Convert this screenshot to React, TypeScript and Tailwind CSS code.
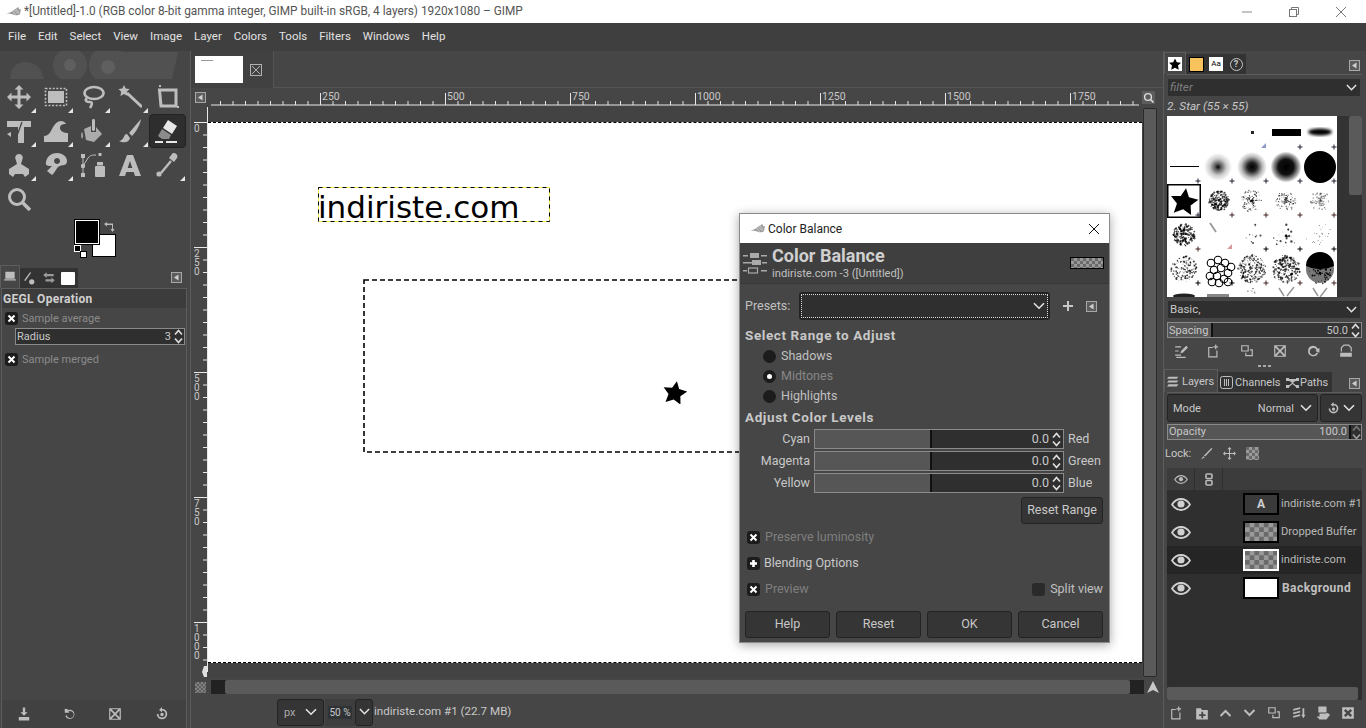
import React from "react";

const FILL = "#bdbdbd";

function Ic({ s = 16, v = 24, children }: { s?: number; v?: number; children: React.ReactNode }) {
  return (
    <svg width={s} height={s} viewBox={`0 0 ${v} ${v}`} fill={FILL} className="block shrink-0">
      {children}
    </svg>
  );
}

const Chevron = ({ w = 12, c = "#e4e4e4" }: { w?: number; c?: string }) => (
  <svg width={w} height={w * 0.7} viewBox="0 0 12 8" fill="none" className="block shrink-0">
    <path d="M1 1l5 5 5-5" stroke={c} strokeWidth="1.6" />
  </svg>
);

const Spin = ({ dim = false }: { dim?: boolean }) => (
  <svg width="9" height="15" viewBox="0 0 9 15" fill="none" className="block shrink-0">
    <path d="M1 5.5l3.5-4 3.5 4" stroke={dim ? "#777" : "#ddd"} strokeWidth="1.7" />
    <path d="M1 9.5l3.5 4 3.5-4" stroke={dim ? "#999" : "#ddd"} strokeWidth="1.7" />
  </svg>
);

const DockMenu = () => (
  <svg width="11" height="11" viewBox="0 0 11 11" className="block shrink-0">
    <rect x="0.5" y="0.5" width="10" height="10" fill="#5c5c5c" stroke="#a8a8a8" />
    <path d="M7.5 2.5v6L3 5.5z" fill="#cfcfcf" />
  </svg>
);

const Wilber = ({ c = "#9b9b9b", s = 15 }: { c?: string; s?: number }) => (
  <svg width={s} height={s * 0.7} viewBox="0 0 17 12" className="block shrink-0">
    <path d="M0 8c4 0 5-1 8-3l6-4 1 3 2-1-1 6c-2 2-5 2-7 1L6 9z" fill={c} />
    <path d="M9 4l5 5M11 3l4 5M7 5l4 5" stroke="#ffffff" strokeWidth="0.6" />
  </svg>
);

const Checker = ({ w, h, cell = 5 }: { w: number; h: number; cell?: number }) => {
  const squares: React.ReactNode[] = [];
  for (let y = 0; y * cell < h; y++) {
    for (let x = 0; x * cell < w; x++) {
      if ((x + y) % 2 === 0) squares.push(<rect key={`${x}-${y}`} x={x * cell} y={y * cell} width={cell} height={cell} fill="#6a6a6a" />);
    }
  }
  return (
    <svg width={w} height={h} viewBox={`0 0 ${w} ${h}`} className="block">
      <rect width={w} height={h} fill="#999999" />
      {squares}
    </svg>
  );
};

const Tri = () => (
  <svg width="5" height="5" viewBox="0 0 5 5" className="absolute right-[1px] bottom-[1px]">
    <path d="M5 0v5H0z" fill="#e6e6e6" />
  </svg>
);

const STAR = "M12 1l3.600 7.400 8.400 1-6 5.800 1.600 8.300L12 19.500 4.400 23.500 6 15.200 0 9.400l8.400-1z";

const tools: { k: string; n: React.ReactNode; tri: boolean; active?: boolean }[] = [
  { k: "move", tri: true, n: <path d="M12 0l4.5 4.5H13.5V10.5h6V7.5L24 12l-4.5 4.5v-3h-6v6h3L12 24l-4.5-4.5h3v-6h-6v3L0 12l4.5-4.5v3h6v-6h-3z" /> },
  { k: "rect", tri: true, n: <g><rect x="1.5" y="3.5" width="21" height="17" fill="none" stroke={FILL} strokeWidth="1.6" strokeDasharray="2 1.6" /><rect x="4" y="6" width="16" height="12" /></g> },
  { k: "lasso", tri: true, n: <g fill="none" stroke={FILL} strokeWidth="2.6"><ellipse cx="13" cy="8" rx="9.5" ry="6" /><path d="M6 13c-3 3 0 4 3 4s2 3 0 6" /></g> },
  { k: "wand", tri: true, n: <g><path d="M9 8l15 14" stroke={FILL} strokeWidth="3" /><path d="M6 0l1.6 3.6L11.5 4 8.8 6.8 9.6 11 6 9 2.4 11l.8-4.2L.5 4l3.9-.4z" /></g> },
  { k: "crop", tri: false, n: <g><path d="M4 0h2v2H4z" /><path d="M4.5 5H21v16H6z" fill="none" stroke={FILL} strokeWidth="3" /><rect x="22" y="21" width="2" height="2" /></g> },
  { k: "transform", tri: true, n: <g><path d="M0 2h24v6H17v16h-6V8H0z" /><path d="M15 3l-4 11c-1 4-4 3-8 2" fill="none" stroke="#464646" strokeWidth="1.3" /><path d="M0 15l4-2v5z" /></g> },
  { k: "warp", tri: true, n: <path d="M0 23v-6c4 0 6-3 8-7 2-4 5-8 9-8 2 0 4 1 5 3-4 0-6 1-6 4s4 5 8 5v9z" /> },
  { k: "bucket", tri: true, n: <g><rect x="11" y="0" width="3" height="12" rx="1.4" /><path d="M3 10l7-3v6h5V8l6 7-8 8-8-2z" opacity=".85" /><path d="M1 13c2 3 1 6 0 7-1-2-2-4 0-7z" opacity=".7" /></g> },
  { k: "brush", tri: true, n: <g><path d="M23 0L11 14l3 3C18 13 22 6 23 0z" /><path d="M9 15c-4 0-2 6-8 7 4 2 10 2 11-3z" /></g> },
  { k: "eraser", tri: false, active: true, n: <g><path d="M13 1l9 6-5 8-9-6z" fill="#e8e8e8" /><path d="M7 10l9 6-2 4H7l-4-3z" fill="#8b8b8b" /><rect x="0" y="22" width="8" height="2" fill="#e8e8e8" /><rect x="11" y="22" width="11" height="2" fill="#e8e8e8" /></g> },
  { k: "clone", tri: true, n: <path d="M12 1a4 4 0 0 1 3 6.5L14 11l8 5v5l-4 3-2-3H8l-2 3-4-3v-5l8-5-1-3.5A4 4 0 0 1 12 1z" /> },
  { k: "heal", tri: true, n: <path d="M2 9C3 3 8 0 13 0c6 0 10 4 10 8 0 6-6 3-9 6-2 2-4 7-6 8l-5-4 5-5C4 13 1 13 2 9zM13 5a3 3 0 1 0 .1 0z" fillRule="evenodd" /> },
  { k: "path", tri: false, n: <g><rect x="0" y="1" width="4" height="4" /><rect x="0" y="20" width="4" height="4" /><circle cx="2" cy="13" r="2.2" /><path d="M2 4v17M2 13L7 5c2-3 5-3 8-3" fill="none" stroke={FILL} strokeWidth="1" /><rect x="14" y="13" width="10" height="11" rx="1" /><rect x="16" y="9" width="6" height="3.5" /><rect x="17.5" y="0" width="3" height="3" /></g> },
  { k: "text", tri: false, n: <path d="M9 2h6l8 21h-6l-1.3-4H8.3L7 23H1zM12 8l-2.3 7h4.6z" fillRule="evenodd" /> },
  { k: "picker", tri: true, n: <g><path d="M16 8L6 20" stroke={FILL} strokeWidth="2.4" /><circle cx="4" cy="21" r="2.6" /><path d="M14 5l5 4 3-4c2-3-3-7-5-4z" /></g> },
  { k: "zoom", tri: false, n: <g><circle cx="10" cy="10" r="7.5" fill="none" stroke={FILL} strokeWidth="3" /><path d="M15 15l8 8" stroke={FILL} strokeWidth="3.6" /></g> },
];

const Check = ({ sign = "x" }: { sign?: "x" | "+" }) => (
  <span className="flex h-[13px] w-[13px] items-center justify-center rounded-[3px] bg-[#1c1c1c] shrink-0">
    <svg width="9" height="9" viewBox="0 0 9 9">
      {sign === "x" ? <path d="M1.5 1.5l6 6M7.5 1.5l-6 6" stroke="#fff" strokeWidth="2" /> : <path d="M4.5 1v7M1 4.5h7" stroke="#fff" strokeWidth="2.6" />}
    </svg>
  </span>
);

function rng(seed: number) {
  let s = seed;
  return () => {
    s = (s * 16807) % 2147483647;
    return s / 2147483647;
  };
}

function Splat({ cx, cy, r, n, seed, dot = 0.7, op = 0.7, ring = false }: { cx: number; cy: number; r: number; n: number; seed: number; dot?: number; op?: number; ring?: boolean }) {
  const R = rng(seed);
  const out: React.ReactNode[] = [];
  for (let i = 0; i < n; i++) {
    const a = R() * Math.PI * 2;
    const d = (ring ? Math.sqrt(R()) : R()) * r;
    out.push(<circle key={i} cx={(cx + Math.cos(a) * d).toFixed(1)} cy={(cy + Math.sin(a) * d).toFixed(1)} r={(0.25 + R() * dot).toFixed(2)} fill="#000" opacity={op} />);
  }
  return <g>{out}</g>;
}

const Plus = ({ x, y, c = "#000" }: { x: number; y: number; c?: string }) => <path d={`M${x - 2.5} ${y}h5M${x} ${y - 2.5}v5`} stroke={c} strokeWidth="1" />;

function Brushes() {
  const cw = 34;
  const cell = (col: number, row: number) => [col * cw + 17, row * cw + 17];
  const soft = (col: number, id: string, r: number) => {
    const [x, y] = cell(col, 1);
    return <circle cx={x} cy={y} r={r} fill={`url(#${id})`} />;
  };
  return (
    <svg width="170" height="181" viewBox="0 0 170 181" className="block shrink-0">
      <defs>
        <radialGradient id="g1"><stop offset="0" stopColor="#000" /><stop offset=".2" stopColor="#555" /><stop offset=".6" stopColor="#ccc" /><stop offset="1" stopColor="#fff" /></radialGradient>
        <radialGradient id="g2"><stop offset="0" stopColor="#000" /><stop offset=".3" stopColor="#222" /><stop offset=".7" stopColor="#bbb" /><stop offset="1" stopColor="#fff" /></radialGradient>
        <radialGradient id="g3"><stop offset="0" stopColor="#000" /><stop offset=".5" stopColor="#111" /><stop offset=".85" stopColor="#aaa" /><stop offset="1" stopColor="#fff" /></radialGradient>
        <filter id="b1"><feGaussianBlur stdDeviation="1.4" /></filter>
      </defs>
      <rect width="170" height="181" fill="#fff" />
      <rect x="84" y="15" width="3" height="3" fill="#222" />
      <rect x="105" y="13" width="29" height="7" fill="#000" />
      <ellipse cx="153" cy="16" rx="12" ry="3.4" fill="#000" filter="url(#b1)" />
      <path d="M99 32v-5l-5 5z" fill="#8d9ac6" />
      <Plus x={133} y={31} c="#223" />
      <Plus x={167} y={31} c="#223" />
      <rect x="3" y="50" width="29" height="1" fill="#000" />
      {soft(1, "g1", 14)}
      {soft(2, "g2", 15)}
      {soft(3, "g3", 15.5)}
      <circle cx="153" cy="51" r="16" fill="#000" />
      {[31, 65, 99, 133, 167].map((x) => <Plus key={x} x={x} y={65} c="#223" />)}
      <Splat cx={52} cy={85} r={10} n={190} seed={11} ring dot={0.9} />
      <Splat cx={85} cy={85} r={11} n={110} seed={12} dot={0.6} />
      <Splat cx={119} cy={85} r={10} n={110} seed={13} dot={0.5} />
      <Splat cx={153} cy={85} r={10} n={110} seed={14} dot={0.7} op={0.35} />
      {[65, 99, 133, 167].map((x) => <Plus key={x} x={x} y={99} c="#422" />)}
      <rect x="0.75" y="68.75" width="32.5" height="32.5" fill="none" stroke="#000" strokeWidth="1.5" />
      <path d={STAR} fill="#000" transform="translate(3.500 71) scale(1.15) rotate(8 12 12)" />
      <Plus x={31} y={99} c="#223" />
      <Splat cx={17} cy={119} r={11} n={220} seed={15} ring dot={0.9} />
      <path d="M43 107l6 9" stroke="#999" strokeWidth="1.8" />
      <path d="M65 133v-5l-5 5z" fill="#d89a9a" />
      <Splat cx={88} cy={120} r={13} n={12} seed={16} dot={0.9} />
      <Splat cx={119} cy={120} r={13} n={24} seed={17} dot={1.1} />
      <Splat cx={153} cy={120} r={14} n={24} seed={18} dot={0.2} op={1} />
      <Plus x={31} y={133} c="#422" />
      <Plus x={99} y={133} />
      <Plus x={133} y={133} />
      <Plus x={167} y={133} />
      <Splat cx={17} cy={153} r={13} n={170} seed={19} dot={0.7} ring />
      <g fill="none" stroke="#000" strokeWidth="1.1">
        {[[44,147],[51,144],[58,147],[64,151],[47,154],[54,152],[61,157],[43,160],[50,160],[57,163],[45,166],[52,167],[61,166]].map(([x, y], i) => <circle key={i} cx={x} cy={y} r="3.8" />)}
      </g>
      <Splat cx={85} cy={153} r={14} n={280} seed={20} dot={0.7} ring />
      <Splat cx={119} cy={153} r={14} n={230} seed={21} dot={0.9} ring />
      <circle cx="153" cy="153" r="14" fill="#777" />
      <path d="M139 150a14 14 0 0 1 28 0c-8 4-20 4-28 0z" fill="#000" />
      <Splat cx={153} cy={157} r={11} n={70} seed={22} dot={0.7} op={1} />
      <Plus x={31} y={167} />
      <Plus x={65} y={167} />
      <Plus x={99} y={167} c="#422" />
      <Plus x={133} y={167} c="#422" />
      <Plus x={167} y={167} c="#422" />
      <ellipse cx="17" cy="180" rx="11" ry="2.5" fill="#222" />
      <rect x="40" y="178" width="22" height="3" fill="#888" />
      <Splat cx={85} cy={175} r={5} n={10} seed={23} dot={0.5} />
      <path d="M112 172l5 8M127 171l-7 9M146 172l5 8M160 172l-7 9" stroke="#999" strokeWidth="1.5" />
    </svg>
  );
}

const TopRuler = () => {
  const ticks: React.ReactNode[] = [];
  for (let i = 0; i < 74; i++) {
    const x = 9 + i * 12.5;
    const major = (i - 8) % 10 === 0;
    ticks.push(<rect key={i} x={x} y={major ? 4 : 12} width="1" height={major ? 12 : 4} fill="#e8e8e8" />);
  }
  const labels = ["250", "500", "750", "1000", "1250", "1500", "1750"];
  return (
    <svg width="928" height="17" viewBox="0 0 928 17" className="block">
      <rect x="0" y="15.5" width="928" height="1" fill="#e8e8e8" />
      {ticks}
      {labels.map((t, i) => (
        <text key={t} x={111 + i * 125} y="11" fontSize="10.5" fill="#c8c8c8" fontFamily="Roboto, sans-serif">{t}</text>
      ))}
    </svg>
  );
};

const SideRuler = () => {
  const ticks: React.ReactNode[] = [];
  for (let i = 0; i < 45; i++) {
    const y = 0 + i * 12.5 + 15;
    const major = i % 10 === 0;
    ticks.push(<rect key={i} x={major ? 3 : 12} y={y} width={major ? 13 : 4} height="1" fill="#e8e8e8" />);
  }
  const lab: [string[], number][] = [[["0"], 25], [["2", "5", "0"], 150], [["5", "0", "0"], 275], [["7", "5", "0"], 400], [["1", "0", "0", "0"], 525]];
  return (
    <svg width="17" height="571" viewBox="0 0 17 571" className="block">
      <rect x="16" y="0" width="1" height="565" fill="#e8e8e8" />
      {ticks}
      {lab.map(([digits, y], i) => (
        <text key={i} y={y} fontSize="10" fill="#c8c8c8" fontFamily="Roboto, sans-serif">
          {digits.map((d, j) => (
            <tspan key={j} x="3" dy={j === 0 ? 0 : 9}>{d}</tspan>
          ))}
        </text>
      ))}
      <path d="M13 559h3v11h-3l-2-5z" fill="#e0e0e0" />
    </svg>
  );
};

const Slider = ({ label, right }: { label: string; right: string }) => (
  <div className="flex h-[22px] items-center">
    <span className="w-[69px] pr-[4px] text-right text-[#c8c8c8]">{label}</span>
    <div className="flex h-[20px] w-[250px] border border-[#8a8a8a] bg-[#2f2f2f]">
      <div className="w-[117px] border-r-2 border-[#111] bg-[#565656]" />
      <div className="flex flex-1 items-center justify-end gap-[3px] pr-[2px] text-[#c8c8c8]">
        <span>0.0</span>
        <Spin />
      </div>
    </div>
    <span className="pl-[4px] text-[#c8c8c8]">{right}</span>
  </div>
);

const Btn = ({ t }: { t: string }) => (
  <div className="flex h-[27px] w-[85px] items-center justify-center rounded-[3px] border border-[#232323] bg-[#353535] text-[#c8c8c8]">{t}</div>
);

const Radio = ({ t, on = false }: { t: string; on?: boolean }) => (
  <div className="flex h-[20px] items-center gap-[5px] pl-[23px]">
    <span className="flex h-[13px] w-[13px] items-center justify-center rounded-full bg-[#1c1c1c]">
      {on && <span className="h-[5px] w-[5px] rounded-full bg-white" />}
    </span>
    <span className={on ? "text-[#868686]" : "text-[#c0c0c0]"}>{t}</span>
  </div>
);

const Eye = () => (
  <svg width="20" height="13" viewBox="0 0 20 13" className="block">
    <path d="M1 6.5C4 2 7 1 10 1s6 1 9 5.5C16 11 13 12 10 12S4 11 1 6.5z" fill="none" stroke="#d0d0d0" strokeWidth="1.8" />
    <circle cx="10" cy="6" r="3.6" fill="#d0d0d0" />
  </svg>
);

const Layer = ({ name, thumb, active = false, bold = false }: { name: string; thumb: React.ReactNode; active?: boolean; bold?: boolean }) => (
  <div className={`flex h-[28px] items-center ${active ? "bg-[#252525]" : ""}`}>
    <div className="flex w-[28px] justify-center"><Eye /></div>
    <div className={`ml-[48px] flex h-[22px] w-[36px] shrink-0 items-center justify-center overflow-hidden border-2 ${active ? "border-white" : "border-black"}`}>{thumb}</div>
    <span className={`ml-[2px] whitespace-nowrap ${bold ? "ml-[3px] text-[12px] font-bold tracking-[0.45px] text-[#c0c0c0]" : "text-[11.2px] text-[#b8b8b8]"}`}>{name}</span>
  </div>
);

export default function App() {
  return (
    <div className="relative flex h-[728px] w-[1366px] flex-col overflow-hidden bg-[#464646] text-[12px] leading-none text-[#c8c8c8] [font-family:'Roboto','Noto_Sans',sans-serif]">
      {/* title bar */}
      <div className="flex h-[23px] items-center bg-white text-[#555]">
        <div className="ml-[6px] mr-[2px] w-[16px]"><Wilber /></div>
        <span className="text-[11.85px] whitespace-nowrap">*[Untitled]-1.0 (RGB color 8-bit gamma integer, GIMP built-in sRGB, 4 layers) 1920x1080 – GIMP</span>
        <div className="ml-auto flex items-center text-[#666]">
          <svg width="12" height="12" viewBox="0 0 12 12" className="mr-[35px]"><path d="M1 6h10" stroke="#888" /></svg>
          <svg width="12" height="12" viewBox="0 0 12 12" className="mr-[35px]" fill="none" stroke="#777"><rect x="1.5" y="3.5" width="7" height="7" /><path d="M3.5 3.5v-2h7v7h-2" /></svg>
          <svg width="12" height="12" viewBox="0 0 12 12" className="mr-[19px]" fill="none" stroke="#777"><path d="M1 1l10 10M11 1L1 11" /></svg>
        </div>
      </div>
      {/* menu */}
      <div className="flex h-[28px] items-center gap-[12px] bg-[#3f3f3f] pl-[8px] text-[11.5px] text-[#e2e2e2]">
        {["File", "Edit", "Select", "View", "Image", "Layer", "Colors", "Tools", "Filters", "Windows", "Help"].map((m) => <span key={m}>{m}</span>)}
      </div>

      <div className="flex flex-1">
        {/* left dock */}
        <div className="flex w-[191px] flex-col border-r border-[#5c5c5c] shrink-0">
          <div className="relative h-[28px] shrink-0">
            <svg width="180" height="28" viewBox="0 0 180 28" className="block">
              <path d="M10 28c0-10 6-17 15-17 8 0 14 4 17 11l2 6z" fill="#515151" />
              <circle cx="70" cy="14" r="17" fill="#515151" />
              <circle cx="108" cy="14" r="19" fill="#515151" />
              <circle cx="70" cy="14" r="6" fill="#5f5f5f" />
              <circle cx="108" cy="16" r="7" fill="#5f5f5f" />
              <path d="M120 1h58l-6 27h-56z" fill="#515151" />
            </svg>
          </div>
          <div className="grid w-[186px] grid-cols-5 pt-[1px]">
            {tools.map((t) => (
              <div key={t.k} className={`relative flex h-[34px] w-[37px] items-center justify-center ${t.active ? "rounded-[4px] border border-[#222] bg-[#2e2e2e]" : ""}`}>
                <Ic s={24}>{t.n}</Ic>
                {t.tri && <Tri />}
              </div>
            ))}
          </div>
          <div className="relative mx-auto mt-[4px] h-[38px] w-[40px] shrink-0">
            <div className="absolute left-[17px] top-[14px] h-[23px] w-[24px] border border-black bg-white" />
            <div className="absolute left-0 top-0 h-[24px] w-[24px] border border-white bg-black outline outline-1 outline-black" />
            <svg width="12" height="12" viewBox="0 0 12 12" className="absolute left-[28px] top-[1px]">
              <path d="M1 3l3-2v1.6h6V8h1.6L9.5 11 7.5 8H9V4H4v1.5z" fill="#bbb" />
            </svg>
            <div className="absolute left-[-1px] top-[25px] h-[7px] w-[7px] border border-white bg-black" />
            <div className="absolute left-[5px] top-[31px] h-[7px] w-[7px] border border-black bg-white" />
          </div>
          <div className="mt-[7px] flex h-[23px] items-end pr-[8px] shrink-0">
            <div className="flex h-[23px] w-[20px] items-center justify-center border-x border-t border-[#5c5c5c]">
              <Ic s={14}><path d="M4 3h16v12H4zM2 16h20v2H2zM6 18l-1 5M18 18l1 5" /></Ic>
            </div>
            <div className="flex h-[20px] w-[19px] items-center justify-center bg-[#333]"><Ic s={14}><path d="M15 14a4.5 4.5 0 1 1 0 9 4.5 4.5 0 0 1 0-9zM2 16L12 2l2 1L4 17z" /></Ic></div>
            <div className="flex h-[20px] w-[19px] items-center justify-center bg-[#333]"><Ic s={14}><path d="M8 2L2 7l6 5V9h12V5H8zM16 11l6 5-6 5v-3H6v-4h10z" opacity=".75" /></Ic></div>
            <div className="flex h-[20px] w-[20px] items-center justify-center bg-[#333]"><div className="h-[13px] w-[14px] rounded-[1px] bg-white" /></div>
            <div className="ml-auto mb-[5px]"><DockMenu /></div>
          </div>
          <div className="ml-[1px] mr-[3px] flex flex-1 flex-col border-x border-t border-[#5c5c5c] text-[11px]">
            <div className="flex h-[19px] items-center bg-[#3c3c3c] pl-[1px] text-[12px] font-bold tracking-[0.3px] text-[#d0d0d0]">GEGL Operation</div>
            <div className="flex h-[20px] items-center gap-[4px] pl-[3px] text-[#8b8b8b]"><Check /><span>Sample average</span></div>
            <div className="ml-[13px] mr-[1px] flex h-[17px] items-center border border-[#8a8a8a] bg-[#2f2f2f] px-[1px] text-[#c8c8c8]">
              <span>Radius</span>
              <span className="ml-auto mr-[3px]">3</span>
              <Spin />
            </div>
            <div className="flex h-[27px] items-center gap-[4px] pl-[3px] pt-[1px] text-[#8b8b8b]"><Check /><span>Sample merged</span></div>
            <div className="mt-auto flex h-[28px] items-center bg-[#414141] pl-[15px]">
              <div className="flex w-[46px]"><Ic s={14}><path d="M10 1h4v8h4l-6 6-6-6h4zM3 17h18v6H3z" /></Ic></div>
              <div className="flex w-[45px]"><Ic s={14}><path d="M3 3l6 1-2 2a8 8 0 1 1-3 9l2.500-1A6 6 0 1 0 9 8l2 2-8 0z" /></Ic></div>
              <div className="flex w-[47px]"><Ic s={14}><path d="M2 2h20v20H2zM6 4l6 6 6-6zM4 6v12l6-6zM20 6l-6 6 6 6zM6 20h12l-6-6z" fillRule="evenodd" /></Ic></div>
              <div className="flex"><Ic s={14}><path d="M12 3a9 9 0 1 1-9 9h3a6 6 0 1 0 6-6v3L7 5l5-5zM12 10a3 3 0 1 1 0 6 3 3 0 0 1 0-6z" /></Ic></div>
            </div>
          </div>
        </div>

        {/* center */}
        <div className="flex w-[972px] flex-col shrink-0">
          <div className="flex h-[37px] shrink-0">
            <div className="flex w-[83px] items-center border-r border-[#555] bg-[#414141] pl-[4px]">
              <div className="h-[27px] w-[48px] bg-white pl-[6px] pt-[4px]"><div className="h-px w-[12px] bg-[#999]" /></div>
              <svg width="12" height="12" viewBox="0 0 12 12" className="ml-[7px]" fill="none" stroke="#b0b0b0"><rect x=".5" y=".5" width="11" height="11" /><path d="M2 2l8 8M10 2l-8 8" /></svg>
            </div>
            <div className="flex-1 border-b border-[#555]" />
          </div>
          <div className="flex h-[19px] shrink-0 items-center">
            <div className="ml-[4px] mr-[5px]"><DockMenu /></div>
            <TopRuler />
            <svg width="13" height="13" viewBox="0 0 13 13" className="ml-[3px]"><rect width="13" height="13" fill="#5c5c5c" /><circle cx="6" cy="6" r="3.4" fill="none" stroke="#ddd" strokeWidth="1.4" /><path d="M8.500 8.500l3 3" stroke="#ddd" strokeWidth="1.6" /></svg>
          </div>
          <div className="flex h-[571px] shrink-0">
            <div className="w-[17px] shrink-0"><SideRuler /></div>
            <div className="flex-1 overflow-hidden bg-[#434343] pt-[15px]">
              <div className="relative h-[541px] w-[934px] border-y border-dashed border-black bg-white">
                <span className="absolute left-[110px] top-[64px] whitespace-nowrap text-[31px] leading-[40px] text-black [font-family:'DejaVu_Sans',sans-serif]">indiriste.com</span>
                <svg width="234" height="36" viewBox="0 0 234 36" className="absolute left-[110px] top-[64px]" fill="none">
                  <rect x=".5" y=".5" width="231" height="34" stroke="#f4f04a" />
                  <rect x=".5" y=".5" width="231" height="34" stroke="#000" strokeDasharray="4 4" />
                </svg>
                <svg width="500" height="176" viewBox="0 0 500 176" className="absolute left-[155px] top-[156px]" fill="none">
                  <rect x="1" y="1" width="498" height="172" stroke="#000" strokeWidth="1.6" strokeDasharray="5 3" />
                </svg>
                <svg width="24" height="24" viewBox="0 0 24 24" className="absolute left-[455px] top-[257px]"><path d={STAR} fill="#000" transform="rotate(10 12 12)" /></svg>
              </div>
            </div>
            <div className="w-[21px] shrink-0 pl-[1px] pr-[6px]">
              <div className="mt-[1px] h-[569px] w-[14px] rounded-[2px] border border-[#2a2a2a] bg-[#5a5a5a]" />
            </div>
          </div>
          <div className="flex h-[18px] shrink-0 items-center pl-[4px]">
            <div className="flex h-[11px] w-[11px] items-center opacity-70"><Checker w={11} h={11} cell={2} /></div>
            <div className="ml-[5px] flex h-[14px] w-[933px] bg-[#222]">
              <div className="ml-[14px] w-[905px] rounded-[2px] bg-[#5a5a5a]" />
            </div>
            <svg width="14" height="14" viewBox="0 0 14 14" className="ml-[2px]"><path d="M7 1l6 12-6-3-6 3z" fill="#c8c8c8" /></svg>
          </div>
          <div className="flex flex-1 items-center pl-[86px]">
            <div className="flex h-[27px] w-[47px] items-center justify-between rounded-[3px] border border-[#232323] bg-[#353535] px-[6px] text-[#aaa]"><span className="text-[11px]">px</span><Chevron /></div>
            <div className="ml-[1px] flex h-[27px] w-[30px] items-center justify-center bg-[#3e3e3e]"><span className="bg-[#2f3336] px-[1px] text-[10px] leading-[13px] text-[#c8c8c8]">50 %</span></div>
            <div className="flex h-[27px] w-[18px] items-center justify-center rounded-[3px] border border-[#232323] bg-[#353535]"><Chevron w={11} /></div>
            <span className="ml-[1px] text-[11.6px] text-[#c8c8c8]">indiriste.com #1 (22.7 MB)</span>
          </div>
        </div>

        {/* right dock */}
        <div className="flex w-[203px] shrink-0 flex-col border-l border-[#5c5c5c] pl-[3px] pr-[4px] text-[11px]">
          <div className="-ml-[3px] flex h-[23px] items-end">
            <div className="flex h-[22px] w-[22px] items-center justify-center border-x border-t border-[#5c5c5c]">
              <div className="flex h-[14px] w-[14px] items-center justify-center bg-white"><svg width="12" height="12" viewBox="0 0 24 24"><path d={STAR} /></svg></div>
            </div>
            <div className="flex h-[20px] w-[20px] items-center justify-center bg-[#333]"><div className="h-[13px] w-[13px] bg-[#f8c35c] outline outline-1 outline-black" /></div>
            <div className="flex h-[20px] w-[20px] items-center justify-center bg-[#333]"><div className="flex h-[14px] w-[14px] items-center justify-center bg-white text-[8px] text-black">Aa</div></div>
            <div className="flex h-[20px] w-[20px] items-center justify-center bg-[#333]">
              <span className="flex h-[13px] w-[13px] items-center justify-center rounded-full border-[1.5px] border-[#c8c8c8] text-[9px] font-bold text-[#c8c8c8]">?</span>
            </div>
            <div className="ml-auto mb-[3px] mr-[2px]"><DockMenu /></div>
          </div>
          <div className="border-t border-[#5c5c5c] pl-[1px] pr-[2px] pt-[4px]">
            <div className="flex h-[17px] items-center justify-between bg-[#2f2f2f] pl-[2px] pr-[3px] text-[11.8px] italic text-[#7f7f7f]"><span>filter</span><Chevron w={11} /></div>
          </div>
          <div className="flex h-[20px] items-center pt-[2px] text-[11.8px] italic text-[#c8c8c8]">2. Star (55 × 55)</div>
          <div className="flex h-[181px]">
            <Brushes />
            <div className="flex w-[25px] justify-end bg-[#333]">
              <div className="h-[79px] w-[13px] rounded-[2px] bg-[#5a5a5a]" />
            </div>
          </div>
          <div className="ml-[1px] mr-[2px] mt-[4px] flex h-[17px] items-center justify-between bg-[#2f2f2f] pl-[2px] pr-[3px] text-[11.5px]"><span>Basic,</span><Chevron w={11} /></div>
          <div className="mt-[4px] flex h-[16px] border border-[#8a8a8a] bg-[#353535]">
            <div className="flex w-[45px] items-center border-r-2 border-[#111] bg-[#565656] pl-[1px]">Spacing</div>
            <div className="ml-auto flex items-center gap-[3px] pr-[1px]"><span>50.0</span><Spin /></div>
          </div>
          <div className="flex h-[24px] items-center justify-between pl-[7px] pr-[9px] pt-[2px]">
            <Ic s={14}><path d="M2 4h10v2H2zM2 11h6v2H2zM2 18h10v2H2zM11 16l1-4 9-9 3 3-9 9zM4 22h16v2H4z" /></Ic>
            <Ic s={14}><path d="M4 7h6V5H2v18h16V11h-2v10H4zM14 1v3h-3v2h3v3h2V6h3V4h-3V1z" /></Ic>
            <Ic s={14}><path d="M2 2h13v11H2zM4 4v7h9V4zM9 15h2v4h9v-8h-3V9h5v12H9z" fillRule="evenodd" /></Ic>
            <Ic s={14}><path d="M2 2h20v20H2zM6 4l6 6 6-6zM4 6v12l6-6zM20 6l-6 6 6 6zM6 20h12l-6-6z" fillRule="evenodd" /></Ic>
            <Ic s={14}><path d="M12 3a9 9 0 0 1 8 5l3-1v8l-7-3 2-1.500A6 6 0 1 0 18 15h3a9 9 0 1 1-9-12z" /></Ic>
            <Ic s={14}><path d="M3 13V6l5-5h9l5 5v7h-2V7l-4-4H9L5 7v6zM2 15h20v7H2z" /></Ic>
          </div>
          <div className="flex h-[7px] items-center justify-center gap-[2px]">
            <span className="h-[2px] w-[3px] bg-[#aaa]" /><span className="h-[2px] w-[3px] bg-[#aaa]" /><span className="h-[2px] w-[3px] bg-[#aaa]" />
          </div>
          <div className="-ml-[3px] flex h-[23px] items-end">
            <div className="flex h-[23px] w-[54px] items-center gap-[2px] border-x border-t border-[#5c5c5c] pl-[2px]">
              <Ic s={13}><path d="M3 3h18l-3 4H0zM3 10h18l-3 4H0zM3 17h18l-3 4H0z" /></Ic><span>Layers</span>
            </div>
            <div className="flex h-[20px] w-[66px] items-center gap-[2px] bg-[#333] pl-[2px]">
              <svg width="13" height="13" viewBox="0 0 13 13" fill="none" stroke={FILL}><rect x=".5" y=".5" width="12" height="12" rx="2" /><path d="M4.500 3v7M6.500 3v7M8.500 3v7" /></svg><span>Channels</span>
            </div>
            <div className="flex h-[20px] w-[48px] items-center gap-[1px] bg-[#333] pl-[2px]">
              <svg width="13" height="11" viewBox="0 0 13 11" fill={FILL}><rect x="0" y="1" width="3" height="3" /><rect x="10" y="1" width="3" height="3" /><rect x="0" y="8" width="3" height="3" /><rect x="10" y="8" width="3" height="3" /><path d="M2 2h9v1.500C9 4 8 5 7 6l4 3-1 1-3.500-3L3 10 2 9l4-3C5 5 4 4 2 3.500z" /></svg><span>Paths</span>
            </div>
            <div className="ml-auto mb-[3px] mr-[2px]"><DockMenu /></div>
          </div>
          <div className="border-t border-[#5c5c5c] pt-[1px]">
            <div className="flex h-[28px] gap-[2px]">
              <div className="flex flex-1 items-center rounded-[3px] border border-[#232323] bg-[#353535] pl-[5px] pr-[5px]"><span>Mode</span><span className="ml-auto mr-[6px]">Normal</span><Chevron /></div>
              <div className="flex w-[42px] items-center justify-center gap-[3px] rounded-[3px] border border-[#232323] bg-[#353535]"><Ic s={13}><path d="M12 3a9 9 0 1 1-9 9h3a6 6 0 1 0 6-6v3L7 5l5-5zM12 10a3 3 0 1 1 0 6 3 3 0 0 1 0-6z" /></Ic><Chevron /></div>
            </div>
            <div className="mt-[2px] flex h-[16px] border border-[#8a8a8a] bg-[#565656]">
              <span className="pl-[1px] pt-[1px]">Opacity</span>
              <span className="ml-auto mr-[2px] pt-[1px]">100.0</span>
              <div className="flex w-[12px] items-center justify-center border-l-2 border-[#111] bg-[#2f2f2f]"><Spin dim /></div>
            </div>
            <div className="flex h-[26px] items-center">
              <span className="ml-[-2px] w-[35px]">Lock:</span>
              <Ic s={13}><path d="M21 2l2 1-13 14-3-1zM6 17l3 2-7 4z" /></Ic>
              <div className="ml-[10px]"><Ic s={13}><path d="M12 0l4 4h-3v7h7V8l4 4-4 4v-3h-7v7h3l-4 4-4-4h3v-7H4v3l-4-4 4-4v3h7V4H8z" /></Ic></div>
              <div className="ml-[10px] overflow-hidden"><Checker w={13} h={13} cell={3} /></div>
            </div>
            <div className="mt-[2px] flex h-[232px] flex-col bg-[#2f2f2f]">
              <div className="flex h-[22px] bg-[#3c3c3c]">
                <div className="flex w-[28px] items-center justify-center border-r border-[#2f2f2f]"><svg width="14" height="9" viewBox="0 0 20 13"><path d="M1 6.500C4 2 7 1 10 1s6 1 9 5.500C16 11 13 12 10 12S4 11 1 6.500z" fill="none" stroke="#bbb" strokeWidth="1.800" /><circle cx="10" cy="6" r="3" fill="#bbb" /></svg></div>
                <div className="flex w-[28px] items-center justify-center border-r border-[#2f2f2f]"><svg width="8" height="13" viewBox="0 0 8 13" fill="none" stroke="#bbb" strokeWidth="1.600"><rect x="1" y="1" width="6" height="4.500" rx="1" /><rect x="1" y="7.500" width="6" height="4.500" rx="1" /></svg></div>
              </div>
              <Layer name="indiriste.com #1" thumb={<div className="flex h-full w-full items-center justify-center bg-[#3a3a3a] text-[12px] font-bold leading-none text-[#cfcfcf]">A</div>} />
              <Layer name="Dropped Buffer" thumb={<Checker w={34} h={20} />} />
              <Layer name="indiriste.com" active thumb={<Checker w={34} h={20} />} />
              <Layer name="Background" bold thumb={<div className="h-full w-full bg-white" />} />
              <div className="ml-0 mr-[4px] mt-auto h-[13px] rounded-[2px] bg-[#5a5a5a]" />
            </div>
          </div>
          <div className="flex h-[26px] items-center justify-between pl-[3px] pr-[7px]">
            <Ic s={14}><path d="M4 7h6V5H2v18h16V11h-2v10H4zM14 1v3h-3v2h3v3h2V6h3V4h-3V1z" /></Ic>
            <Ic s={14}><path d="M2 4h8l2 3h10v16H2zM11 10v4H7v3h4v4h3v-4h4v-3h-4v-4z" fillRule="evenodd" /></Ic>
            <svg width="13" height="8" viewBox="0 0 12 8" fill="none"><path d="M1 7l5-5 5 5" stroke="#bdbdbd" strokeWidth="2" /></svg>
            <svg width="13" height="8" viewBox="0 0 12 8" fill="none"><path d="M1 1l5 5 5-5" stroke="#bdbdbd" strokeWidth="2" /></svg>
            <Ic s={14}><path d="M2 2h13v11H2zM4 4v7h9V4zM9 15h2v4h9v-8h-3V9h5v12H9z" fillRule="evenodd" /></Ic>
            <Ic s={14}><path d="M2 5l12-3v3L2 8zM2 11l12-3v3L2 14zM2 17l12-3v3L2 20zM18 4h3v11h2l-3.500 6-3.500-6h2z" /></Ic>
            <Ic s={14}><path d="M4 1h14v10H4zM6 13h10l4-1 4 3-6 8H6l-5-5h5z" /></Ic>
            <Ic s={14}><path d="M2 2h20v20H2zM8 5l4 4 4-4 3 3-4 4 4 4-3 3-4-4-4 4-3-3 4-4-4-4z" fillRule="evenodd" /></Ic>
          </div>
        </div>
      </div>

      {/* Color Balance floating dialog */}
      <div className="absolute left-[739px] top-[213px] flex h-[430px] w-[371px] flex-col border border-[#8a8a8a] bg-[#464646] text-[12.5px] shadow-[0_2px_10px_rgba(0,0,0,0.35)]">
        <div className="flex h-[29px] items-center bg-white pl-[10px] text-[#222] shrink-0">
          <Wilber />
          <span className="ml-[3px] text-[12px]">Color Balance</span>
          <svg width="12" height="12" viewBox="0 0 12 12" className="ml-auto mr-[9px]" fill="none" stroke="#111"><path d="M1 1l10 10M11 1L1 11" /></svg>
        </div>
        <div className="flex h-[41px] items-center border-b border-[#383838] bg-[#3f3f3f] pl-[3px] shrink-0">
          <svg width="24" height="24" viewBox="0 0 24 24" className="block"><path d="M0 4h5v1.500H0zM7 2h9v5H7zM18 4h6v1.500h-6zM0 11h9v1.500H0zM9 9h9v5H9zM19 11h5v1.500h-5zM0 19h4v1.500H0zM18 19h6v1.500h-6z" fill="#aaa" /><rect x="5.500" y="17" width="9" height="5" fill="none" stroke="#aaa" strokeWidth="1.200" /></svg>
          <div className="ml-[5px] flex flex-col">
            <span className="text-[18px] font-bold leading-[20px] text-[#d0d0d0]">Color Balance</span>
            <span className="text-[11.2px] leading-[15px] text-[#c0c0c0]">indiriste.com -3 ([Untitled])</span>
          </div>
          <div className="ml-auto mr-[5px] border border-black"><Checker w={32} h={10} cell={3} /></div>
        </div>
        <div className="flex h-[28px] mt-[8px] items-center pl-[5px] shrink-0">
          <span className="w-[54px] text-[#c0c0c0]">Presets:</span>
          <div className="flex h-[28px] w-[251px] items-center justify-end rounded-[3px] border-[2px] border-[#232323] bg-[#2f2f2f] pr-[3px] outline-1 outline-dotted -outline-offset-3 outline-[#ddd]"><Chevron /></div>
          <svg width="12" height="12" viewBox="0 0 12 12" className="ml-[12px]"><path d="M5 1h2v4h4v2H7v4H5V7H1V5h4z" fill="#c8c8c8" /></svg>
          <div className="ml-[12px]"><DockMenu /></div>
        </div>
        <div className="mt-[7px] flex h-[18px] items-center pl-[5px] text-[13.5px] font-bold tracking-[0.6px] text-[#c8c8c8] shrink-0">Select Range to Adjust</div>
        <div className="mt-[1px] flex flex-col shrink-0">
          <Radio t="Shadows" />
          <Radio t="Midtones" on />
          <Radio t="Highlights" />
        </div>
        <div className="mt-[2px] flex h-[20px] items-center pl-[5px] text-[13.5px] font-bold tracking-[0.6px] text-[#c8c8c8] shrink-0">Adjust Color Levels</div>
        <div className="flex flex-col shrink-0 pl-[5px]">
          <Slider label="Cyan" right="Red" />
          <Slider label="Magenta" right="Green" />
          <Slider label="Yellow" right="Blue" />
        </div>
        <div className="mt-[3px] flex justify-end pr-[6px] shrink-0">
          <div className="flex h-[27px] w-[82px] items-center justify-center rounded-[3px] border border-[#232323] bg-[#353535] text-[#c8c8c8]">Reset Range</div>
        </div>
        <div className="flex h-[26px] items-center gap-[5px] pl-[7px] text-[#7f7f7f] shrink-0"><Check /><span>Preserve luminosity</span></div>
        <div className="flex h-[26px] items-center gap-[4px] pl-[7px] text-[#c8c8c8] shrink-0"><Check sign="+" /><span>Blending Options</span></div>
        <div className="flex h-[26px] items-center gap-[5px] pl-[7px] text-[#7f7f7f] shrink-0">
          <Check /><span>Preview</span>
          <span className="ml-auto h-[13px] w-[13px] rounded-[3px] bg-[#2a2a2a]" />
          <span className="mr-[6px] text-[#c0c0c0]">Split view</span>
        </div>
        <div className="mt-[9px] flex gap-[6px] pl-[5px] shrink-0">
          <Btn t="Help" /><Btn t="Reset" /><Btn t="OK" /><Btn t="Cancel" />
        </div>
      </div>
    </div>
  );
}
